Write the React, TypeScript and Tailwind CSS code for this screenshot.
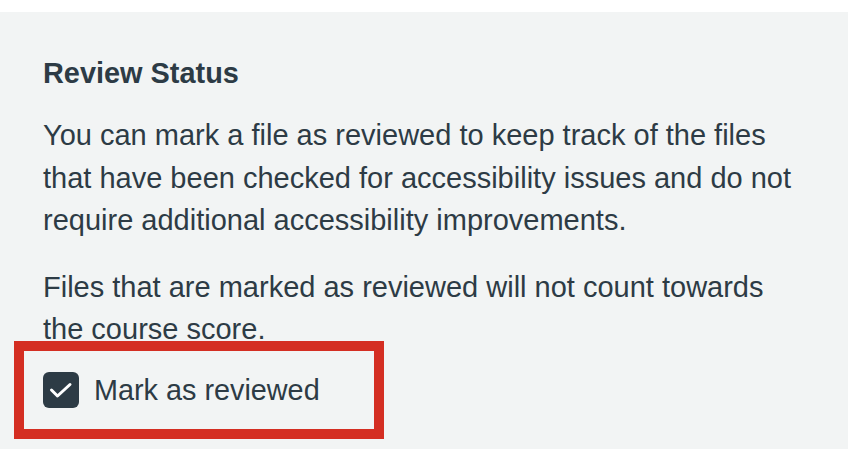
import React from "react";

export default function App() {
  return (
    <div className="w-[858px] h-[456px] bg-white pt-[12px] font-['Liberation_Sans',Arial,sans-serif] text-[#2d3b45]">
      <div className="w-[848px] h-[437px] bg-[#f2f4f4] pl-[43px] pr-[45px] pt-[44px]">
        <h2 className="text-[28.9px] leading-[35px] font-bold">Review Status</h2>
        <p className="mt-[23px] text-[29px] leading-[42.5px]">
          You can mark a file as reviewed to keep track of the files that have been checked for accessibility issues and do not require additional accessibility improvements.
        </p>
        <p className="mt-[24px] text-[29px] leading-[42px]">
          Files that are marked as reviewed will not count towards the course score.
        </p>
        <div className="relative mt-[19px] flex h-[42px] items-center">
          <div className="absolute left-[-29px] top-[-28px] h-[98px] w-[370px] border-[10px] border-[#d42e22]" />
          <div className="h-[36px] w-[36px] rounded-[6px] bg-[#2d3b45]">
            <svg width="36" height="36" viewBox="0 0 36 36" fill="none">
              <path d="M8.5 18 L14.5 24 L27 12.5" stroke="white" strokeWidth="3" strokeLinecap="round" strokeLinejoin="round" />
            </svg>
          </div>
          <span className="ml-[15px] text-[28.8px] leading-[42px]">Mark as reviewed</span>
        </div>
      </div>
    </div>
  );
}
